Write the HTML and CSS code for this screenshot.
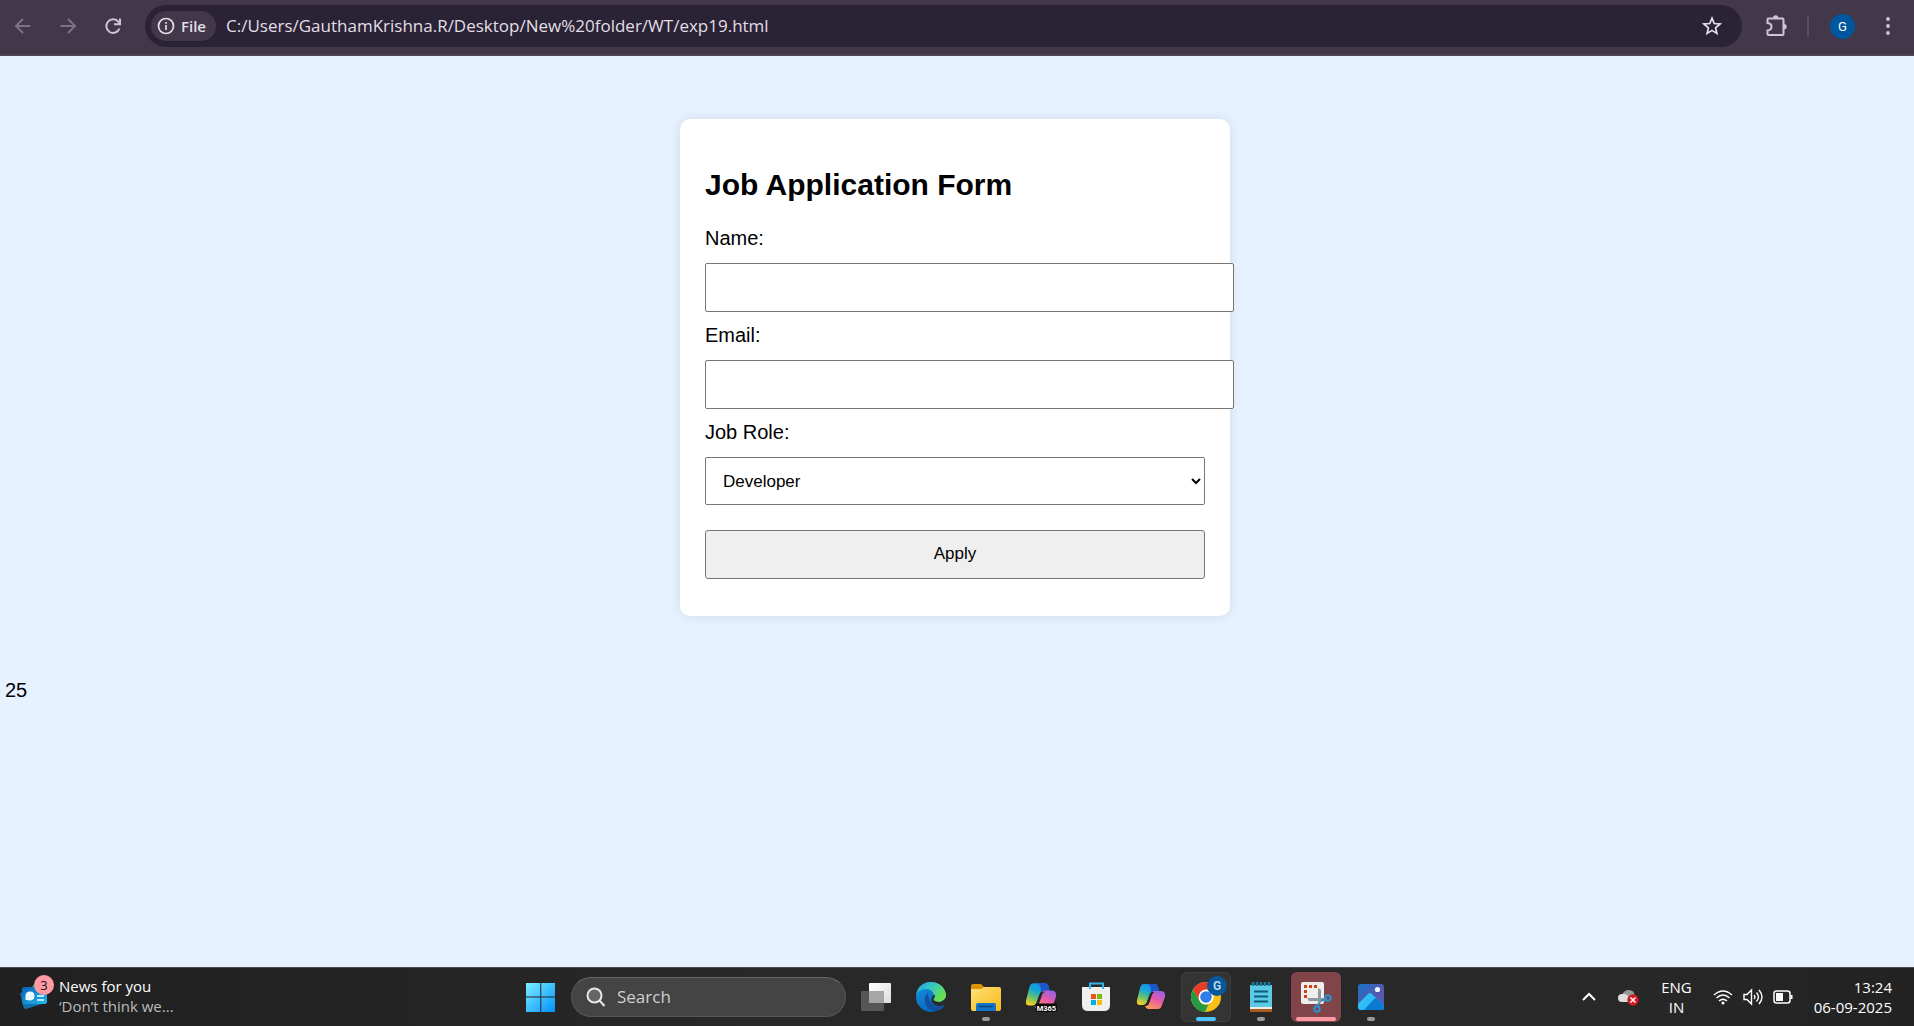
FILE: index.html
```html
<!DOCTYPE html>
<html lang="en">
<head>
<meta charset="utf-8">
<meta name="viewport" content="width=device-width, initial-scale=1">
<title>Job Application Form</title>
<link rel="stylesheet" href="styles.css">
</head>
<body>
<header class="toolbar">
  <nav class="nav">
    <button class="icon-btn dim" aria-label="Back"><svg width="20" height="20" viewBox="0 0 20 20" fill="none" stroke="currentColor" stroke-width="2"><path d="M17.500 10H4M10 3l-7 7 7 7"/></svg></button>
    <button class="icon-btn dim" aria-label="Forward"><svg width="20" height="20" viewBox="0 0 20 20" fill="none" stroke="currentColor" stroke-width="2"><path d="M2.500 10H16M10 3l7 7-7 7"/></svg></button>
    <button class="icon-btn" aria-label="Reload"><svg width="20" height="20" viewBox="0 0 20 20" fill="none" stroke="currentColor" stroke-width="2"><path d="M16.500 12.500A6.800 6.800 0 1 1 15.500 6L17 8M17 2.500V8.300H11"/></svg></button>
  </nav>
  <div class="omnibox">
    <button class="chip"><svg width="18" height="18" viewBox="0 0 18 18" fill="none" stroke="currentColor" stroke-width="1.700"><circle cx="9" cy="9" r="7.500"/><path d="M9 8v5M9 5v1.700"/></svg>File</button>
    <input class="url" type="text" aria-label="Address" value="C:/Users/GauthamKrishna.R/Desktop/New%20folder/WT/exp19.html">
    <button class="icon-btn star" aria-label="Bookmark"><svg width="20" height="20" viewBox="0 0 20 20" fill="none" stroke="currentColor" stroke-width="1.700"><path d="M10 2.200l2.200 5.300 5.800.5-4.400 3.800 1.300 5.600-4.900-3-4.900 3 1.300-5.600L2 8l5.800-.5z"/></svg></button>
  </div>
  <div class="actions">
    <button class="icon-btn" aria-label="Extensions"><svg width="24" height="24" viewBox="0 0 24 24" fill="none" stroke="currentColor" stroke-width="2"><path d="M4.500 4.500h14a1 1 0 0 1 1 1V20a1 1 0 0 1-1 1h-14a1 1 0 0 1-1-1v-3.500q4-.5 4-3.800t-4-3.700V5.500a1 1 0 0 1 1-1z"/><path d="M9 4a2.700 2.700 0 0 1 5.400 0zM20 10a2.700 2.700 0 0 1 0 5.400z" fill="currentColor" stroke="none"/></svg></button>
    <span class="divider"></span>
    <button class="avatar" aria-label="Profile">G</button>
    <button class="icon-btn" aria-label="Menu"><svg width="20" height="20" viewBox="0 0 20 20" fill="currentColor"><circle cx="10" cy="3" r="1.900"/><circle cx="10" cy="10" r="1.900"/><circle cx="10" cy="17" r="1.900"/></svg></button>
  </div>
</header>

<main class="page">
  <form class="card">
    <h2 class="title">Job Application Form</h2>
    <label class="label" for="name">Name:</label>
    <input class="field field-wide" id="name" type="text">
    <label class="label" for="email">Email:</label>
    <input class="field field-wide" id="email" type="email">
    <label class="label" for="role">Job Role:</label>
    <select class="field select" id="role"><option>Developer</option><option>Designer</option><option>Manager</option></select>
    <button class="field apply" type="button">Apply</button>
  </form>
  <p class="count">25</p>
</main>

<footer class="taskbar">
  <button class="news">
    <span class="news-icon">
      <svg width="28" height="28" viewBox="0 0 28 28"><defs><linearGradient id="nw" x2="1" y2="1"><stop offset="0" stop-color="#0b62b8"/><stop offset="1" stop-color="#21b7ee"/></linearGradient></defs><path d="M12 6q0-4 5-4v8h-5z" fill="#46a552"/><path d="M0 11l18-2 4 13-16 5q-2 0-2.500-2z" fill="#1271ac"/><rect x="2" y="5" width="25" height="17" rx="2" fill="url(#nw)"/><path d="M5.500 18v-4a4.500 4.500 0 1 1 5 4.500z" fill="#e8faff"/><path d="M17 14h7M17 18h7" stroke="#b5eaff" stroke-width="2"/></svg>
      <span class="badge">3</span>
    </span>
    <span class="news-text"><span>News for you</span><span class="muted">‘Don’t think we...</span></span>
  </button>

  <div class="dock">
    <button class="app" aria-label="Start"><svg width="30" height="30" viewBox="0 0 30 30"><defs><linearGradient id="win" x2="1" y2="1"><stop offset="0" stop-color="#7df0ff"/><stop offset="1" stop-color="#0090ff"/></linearGradient></defs><path d="M0 1h14.300v13.500H0zM15.300 1H29v13.500H15.300zM0 15.500h14.300V30H0zM15.300 15.500H29V30H15.300z" fill="url(#win)"/></svg></button>
    <label class="search"><svg width="20" height="20" viewBox="0 0 20 20" fill="none" stroke="#e6e6e6" stroke-width="2"><circle cx="8.500" cy="8.500" r="7" fill="#666"/><path d="M13.500 13.500L18.500 19"/></svg><input class="search-input" type="text" placeholder="Search" aria-label="Search"></label>
    <button class="app" aria-label="Task view"><svg width="32" height="30" viewBox="0 0 32 30"><defs><linearGradient id="tv" x2="1" y2="1"><stop offset="0" stop-color="#fff"/><stop offset="1" stop-color="#ddd"/></linearGradient></defs><rect x="9" y="1" width="22" height="20" rx="1" fill="url(#tv)"/><rect x="1" y="9" width="23" height="20" rx="1" fill="#565656"/><path d="M9 9h15v12H9z" fill="#a6a6a6"/></svg></button>
    <button class="app" aria-label="Edge"><svg width="32" height="32" viewBox="0 0 32 32"><defs><linearGradient id="e1" x2="1" y2=".5"><stop offset="0" stop-color="#1ca5e6"/><stop offset=".5" stop-color="#35c7c5"/><stop offset="1" stop-color="#68e04f"/></linearGradient><linearGradient id="e2" x2=".5" y2="1"><stop offset="0" stop-color="#1494df"/><stop offset="1" stop-color="#0866c0"/></linearGradient></defs><circle cx="16" cy="16" r="15" fill="url(#e2)"/><path d="M1 15C2 6 8 1 16 1c9 0 15 7 15 13 0 5-4 7-8 7-3 0-5-1-5-2 0-1 1-1 1-4 0-4-3-7-8-7S2 11 1 15z" fill="url(#e1)"/><path d="M13 12c-5 3-5 17 8 18 4 0 7-3 9-6-9 4-17-1-17-12z" fill="#124f9f"/><path d="M18 14.500q2-2 2 1-2 2-1 4 3 2 7 1.200 3-.7 5-4.200L32 22l-3 2q-5 2-9 0-6-3-2-9.500z" fill="#292929"/></svg></button>
    <button class="app running" aria-label="File Explorer"><svg width="32" height="30" viewBox="0 0 32 30"><defs><linearGradient id="fo" x2="1" y2="1"><stop offset="0" stop-color="#ffe07a"/><stop offset="1" stop-color="#f7b917"/></linearGradient></defs><path d="M1 4q0-2 2-2h8l3 3v5H1z" fill="#d99507"/><path d="M1 7h10l3-2h15q2 0 2 2v20q0 2-2 2H3q-2 0-2-2z" fill="url(#fo)"/><path d="M6 29v-6q0-2 2-2h16q2 0 2 2v6z" fill="#1274c6"/><path d="M9 24.500h14" stroke="#07467f" stroke-width="1.500"/></svg></button>
    <button class="app" aria-label="Microsoft 365 Copilot"><svg width="32" height="32" viewBox="0 0 30 30"><use href="#copilot"/><rect x="10" y="21" width="20" height="8" rx="1" fill="#080808"/><text class="m365" x="11" y="28">M365</text></svg></button>
    <button class="app" aria-label="Store"><svg width="30" height="30" viewBox="0 0 30 30"><path d="M1 5h28v18q0 6-6 6H7q-6 0-6-6z" fill="#efefef"/><path d="M9 7V1.500h13V7" fill="none" stroke="#35b3ed" stroke-width="2"/><path d="M10 12h5v5h-5z" fill="#f1511b"/><path d="M16 12h5v5h-5z" fill="#80bc06"/><path d="M10 18h5v5h-5z" fill="#00adef"/><path d="M16 18h5v5h-5z" fill="#fbbc09"/></svg></button>
    <button class="app" aria-label="Copilot"><svg width="30" height="30" viewBox="0 0 30 30"><defs><linearGradient id="c1" x1=".6" y1="0" x2=".2" y2="1"><stop offset="0" stop-color="#198be8"/><stop offset=".35" stop-color="#16a9d4"/><stop offset=".65" stop-color="#67bf70"/><stop offset="1" stop-color="#ffd21c"/></linearGradient><linearGradient id="c2" x1=".8" y1="0" x2=".3" y2="1"><stop offset="0" stop-color="#9460e8"/><stop offset=".5" stop-color="#ea5aa6"/><stop offset="1" stop-color="#ff9b55"/></linearGradient></defs><g id="copilot"><path d="M8 2h11q2 0 3 3l1 4h-5q-3 0-4 3l-3 8q-1 3-4 3H4q-4 0-3-5L4 6q1-4 4-4z" fill="url(#c1)"/><path d="M12 2h7q2 0 3 3l1 4h-5q-2 0-3 2 0-8-3-9z" fill="#1b56cd"/><path d="M18 9h7q5 0 4 6l-3 8q-1 4-4 4H12q-2 0-3-3 2-1 3-4l3-8q1-3 3-3z" fill="url(#c2)"/><path d="M16 10q-2 1-3 4l-2 6q-1 3-4 3h2q1 2 3 0 1-1 2-4l2-6q1-3 3-3z" fill="#262626"/></g></svg></button>
    <button class="app active" aria-label="Chrome"><svg width="32" height="32" viewBox="0 0 32 32"><circle cx="16" cy="16" r="15" fill="#fbc116"/><path d="M3 8.500A15 15 0 0 1 29 8.500H16L9.500 20z" fill="#e43e2b"/><path d="M3 8.500L9.500 20a7.500 7.500 0 0 0 9 3L15 31A15 15 0 0 1 3 8.500z" fill="#259b46"/><circle cx="16" cy="16" r="7.500" fill="#fff"/><circle cx="16" cy="16" r="5.800" fill="#2f7de9"/></svg><span class="profile">G</span></button>
    <button class="app running" aria-label="Notepad"><svg width="24" height="32" viewBox="0 0 24 32"><path d="M1 27h22v4H1z" fill="#aa5a19"/><path d="M1 25h22v3H1z" fill="#eee"/><path d="M1 4h22v22H1z" fill="#5cc9e5"/><path d="M5 10.500h14M5 15.500h14M5 20.500h14" stroke="#075d7d" stroke-width="2"/><path d="M4 1v4M8 1v4M12 1v4M16 1v4M20 1v4" stroke="#177d9d" stroke-width="2.500"/></svg></button>
    <button class="app snip" aria-label="Snipping Tool"><svg width="32" height="32" viewBox="0 0 32 32"><rect x="1" y="1" width="23" height="22" rx="2" fill="#eee"/><path d="M17 5.500H5.500V18" fill="none" stroke="#d0420d" stroke-width="3" stroke-dasharray="3 2"/><path d="M18 7l3 2v13l-3 2zM7 17h20v3H9z" fill="#90979d"/><circle cx="28" cy="17" r="2.700" fill="none" stroke="#2495d0" stroke-width="2"/><circle cx="17" cy="28" r="2.700" fill="none" stroke="#2495d0" stroke-width="2"/><path d="M25 18l-4 2M18 25l1-3" stroke="#2495d0" stroke-width="2"/></svg></button>
    <button class="app running" aria-label="Photos"><svg width="28" height="28" viewBox="0 0 28 28"><defs><linearGradient id="ph" x2="1" y2="1"><stop offset="0" stop-color="#1673c7"/><stop offset=".6" stop-color="#5a55ad"/><stop offset="1" stop-color="#386bc6"/></linearGradient><linearGradient id="pm" x2="1" y2="1"><stop offset="0" stop-color="#2fc5fa"/><stop offset="1" stop-color="#2fb4f5"/></linearGradient></defs><rect x="1" y="1" width="26" height="26" rx="3" fill="url(#ph)"/><path d="M1 21l10-10q2-2 4 0l12 12v1q0 3-3 3H4q-3 0-3-3z" fill="url(#pm)"/><path d="M7 27l9-10 3-2 8 8q0 4-3 4z" fill="#0a7ad3"/><circle cx="20.500" cy="6.500" r="2.600" fill="#f1f5ff"/></svg></button>
  </div>

  <div class="tray">
    <button class="tray-btn" aria-label="Show hidden icons"><svg width="16" height="12" viewBox="0 0 16 12" fill="none" stroke="currentColor" stroke-width="2"><path d="M2 9l6-6 6 6"/></svg></button>
    <button class="tray-btn" aria-label="OneDrive"><svg width="22" height="20" viewBox="0 0 22 20"><path d="M4 12V8q2-5 7-5 5 0 6 6l-5 6z" fill="#999"/><path d="M4 15a4 4 0 0 1 0-8q4-1 7 3v5z" fill="#ddd"/><circle cx="15" cy="13" r="5.700" fill="#d41825"/><path d="M12.500 10.500l5 5M17.500 10.500l-5 5" stroke="#fff" stroke-width="1.500"/></svg></button>
    <button class="tray-btn lang">ENG<br>IN</button>
    <button class="tray-btn status" aria-label="Network, volume, battery">
      <svg width="20" height="20" viewBox="0 0 20 20" fill="none" stroke="currentColor" stroke-width="1.500"><path d="M1 8q9-8 18 0M3.500 11q6.500-6 13 0M6 14q4-3.500 8 0"/><circle cx="10" cy="16" r="1.500" fill="currentColor" stroke="none"/></svg>
      <svg width="20" height="20" viewBox="0 0 20 20" fill="none" stroke="currentColor" stroke-width="1.400"><path d="M1 7.500h3L8.500 3v14L4 12.500H1zM11 8q2 2 0 4M13.500 5.500q4 4.500 0 9M16 3q6 7 0 14"/></svg>
      <svg width="20" height="20" viewBox="0 0 20 20" fill="none" stroke="currentColor" stroke-width="1.500"><rect x="1" y="4" width="16" height="12" rx="2.500"/><path d="M3 6h7v8H3z" fill="currentColor" stroke="none"/><path d="M18.500 8v4" stroke-width="2"/></svg>
    </button>
    <button class="tray-btn clock">13:24<br>06-09-2025</button>
  </div>
</footer>
</body>
</html>
```
FILE: styles.css
```css
* { box-sizing: border-box; }

body {
  margin: 0;
  min-height: 100vh;
  display: flex;
  flex-direction: column;
  background: #e6f2ff;
  color: #000;
  font: 20px/24px "Liberation Sans", Arial, sans-serif;
}

button { font: inherit; color: inherit; cursor: pointer; }
svg { display: block; flex: none; }

/* Browser toolbar */
.toolbar {
  display: flex;
  align-items: center;
  height: 56px;
  padding: 0 12px 2px 9px;
  background: #42384a;
  border-bottom: 2px solid #4d4650;
  color: #d0c3db;
  font-family: "Open Sans", sans-serif;
}
.nav { display: flex; gap: 17px; margin-right: 18px; }
.icon-btn {
  display: grid;
  place-items: center;
  width: 28px;
  height: 28px;
  padding: 0;
  border: 0;
  background: none;
}
.dim { color: #7d7187; }
.omnibox {
  flex: 1;
  display: flex;
  align-items: center;
  height: 42px;
  padding: 0 16px 0 6px;
  border-radius: 21px;
  background: #2a2335;
  color: #e3dfe6;
}
.chip {
  display: flex;
  align-items: center;
  gap: 6px;
  height: 30px;
  padding: 0 10px 0 6px;
  border: 0;
  border-radius: 15px;
  background: #42384a;
  font-size: 15px;
  font-weight: 600;
}
.url {
  flex: 1;
  min-width: 0;
  height: 30px;
  margin-left: 10px;
  padding: 0;
  border: 0;
  background: none;
  color: inherit;
  font: 17px/30px "Open Sans", sans-serif;
}
.actions { display: flex; align-items: center; margin-left: 20px; }
.divider { width: 2px; height: 20px; margin: 0 21px 0 17px; background: #5a4d64; }
.avatar {
  width: 25px;
  height: 25px;
  margin-right: 19px;
  padding: 0;
  border: 0;
  border-radius: 50%;
  background: #00569f;
  color: #fff;
  font: 13px/25px Roboto, sans-serif;
}

/* Page */
.page { flex: 1; padding: 63px 9px 0 5px; }
.card {
  width: 550px;
  max-width: 100%;
  margin: 0 auto 62px;
  padding: 24px 25px 37px;
  border-radius: 10px;
  background: #fff;
  box-shadow: 0 0 12px rgba(0, 0, 0, 0.1);
}
.title { margin: 25px 0 24px; font-size: 30px; line-height: 34px; }
.label { display: block; margin-bottom: 13px; }
.field {
  display: block;
  width: 100%;
  height: 49px;
  margin: 0 0 11px;
  padding: 0 13px;
  border: 1px solid #767676;
  border-radius: 2px;
  background: #fff;
  color: #000;
  font: 17px/20px "Liberation Sans", Arial, sans-serif;
}
.field-wide { width: calc(100% + 29px); }
.select { height: 48px; margin-bottom: 25px; }
.apply { margin: 0; padding-bottom: 2px; border-radius: 3px; background: #efefef; }
.count { margin: 0; }

/* Taskbar */
.taskbar {
  display: grid;
  grid-template-columns: 1fr auto 1fr;
  align-items: center;
  height: 59px;
  padding: 0 22px 0 20px;
  border-top: 1px solid #4b4b50;
  background: linear-gradient(90deg, #202020, #282828 40%, #282828 85%, #222);
  color: #fff;
  font: 15px/20px "Open Sans", sans-serif;
}
.news {
  display: flex;
  align-items: center;
  gap: 11px;
  justify-self: start;
  padding: 0 0 2px;
  border: 0;
  background: none;
  text-align: left;
}
.news-icon { position: relative; }
.badge {
  position: absolute;
  top: -7px;
  left: 14px;
  width: 20px;
  height: 20px;
  border-radius: 50%;
  background: #ff99a4;
  color: #111;
  font-size: 13px;
  text-align: center;
}
.news-text { display: flex; flex-direction: column; }
.muted { color: #bcbcbc; }
.dock { display: flex; align-items: center; gap: 5px; }
.app {
  position: relative;
  display: grid;
  place-items: center;
  width: 50px;
  height: 50px;
  padding: 0;
  border: 0;
  border-radius: 6px;
  background: none;
}
.running::after, .active::after, .snip::after {
  content: "";
  position: absolute;
  bottom: 1px;
  left: 21px;
  width: 8px;
  height: 4px;
  border-radius: 2px;
  background: #999;
}
.active { background: #343434; box-shadow: inset 0 0 0 1px #3e3e3e; }
.active::after { left: 15px; width: 20px; background: #4cc2ff; }
.snip { background: #804449; }
.snip::after { left: 5px; width: 40px; background: #ff99a4; }
.profile {
  position: absolute;
  top: 4px;
  left: 26px;
  width: 20px;
  height: 20px;
  border-radius: 50%;
  background: #07579b;
  color: #b8d4ec;
  font: bold 12px/20px Roboto, sans-serif;
}
.m365 { fill: #fff; font: bold 7px Roboto, sans-serif; }
.search {
  display: flex;
  align-items: center;
  gap: 11px;
  width: 275px;
  height: 40px;
  padding: 0 14px;
  border: 1px solid #555;
  border-top-color: #666;
  border-radius: 20px;
  background: #444;
}
.search-input {
  flex: 1;
  min-width: 0;
  padding: 0;
  border: 0;
  background: none;
  color: #fff;
  font: 17px/24px "Open Sans", sans-serif;
}
.search-input::placeholder { color: #d0d0d0; opacity: 1; }
.tray { display: flex; align-items: center; justify-self: end; }
.tray-btn { padding: 0 0 1px; border: 0; background: none; }
.tray-btn + .tray-btn { margin-left: 21px; }
.status { display: flex; gap: 10px; }
.clock { text-align: right; }
```
